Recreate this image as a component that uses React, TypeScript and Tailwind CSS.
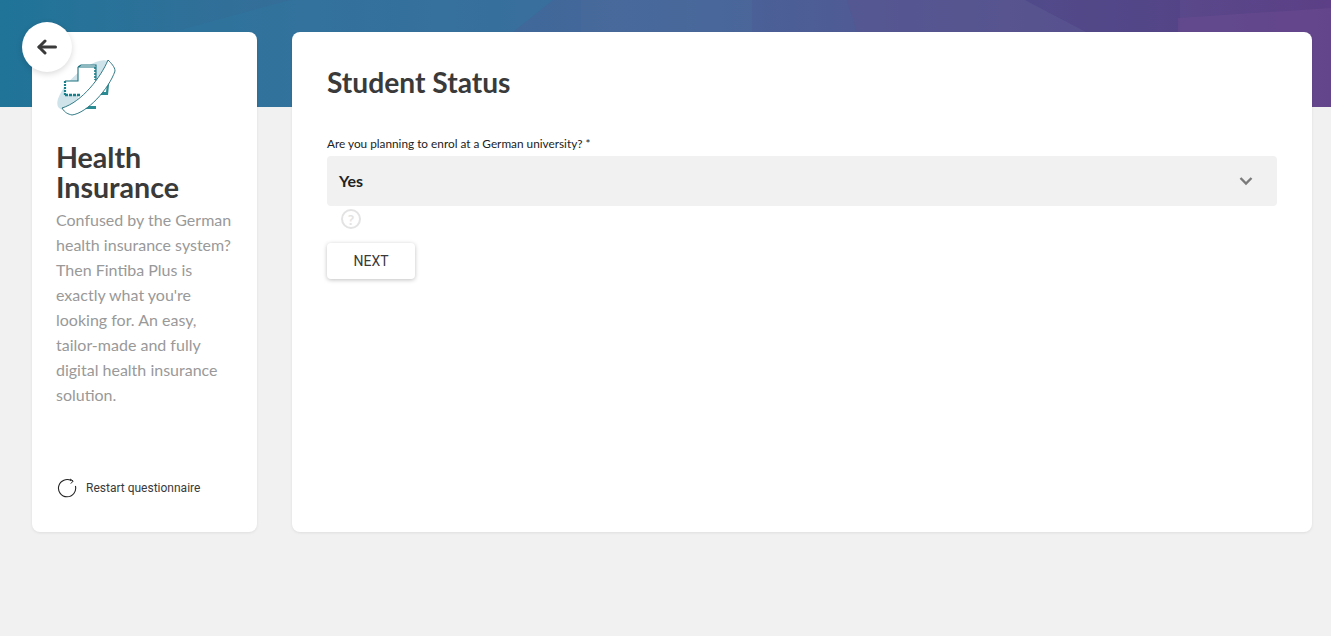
function Banner() {
  return (
    <div className="h-[107px] w-full overflow-hidden bg-gradient-to-r from-[#1f7498] via-[#46659a] to-[#5c3f86]">
      <svg width="1331" height="107" viewBox="0 0 1331 107" fill="none">
        <polygon points="173,32 290,0 553,0 513,32 470,107 260,107" fill="#2f78a0" opacity="0.45" />
        <rect x="581" y="0" width="171" height="107" fill="#4a6b9c" opacity="0.5" />
        <polygon points="847,0 1025,0 1086,32 1086,107 880,107" fill="#5a5590" opacity="0.55" />
        <polygon points="1025,0 1180,0 1180,107 1086,107 1086,32" fill="#4b3f82" opacity="0.35" />
        <polygon points="1178,18 1331,8 1331,107 1178,107" fill="#6a4a90" opacity="0.55" />
      </svg>
    </div>
  )
}

function PlusLogo() {
  return (
    <svg width="60" height="60" viewBox="0 0 60 60" fill="none">
      <ellipse cx="27" cy="28" rx="34" ry="13" transform="rotate(-42 27 28)" fill="#cfe3ea" />
      <path d="M21 8h17v16h13v14H38v14H21V38H8V24h13z" fill="#fff" />
      <path d="M24 8h15v16M21 10l3-2M21 10v14H8M21 10h17" stroke="#1d7380" strokeWidth="1.1" />
      <path d="M8 24v14" stroke="#17808a" strokeWidth="2.2" strokeDasharray="2 1" />
      <path d="M8 38h16" stroke="#17808a" strokeWidth="2.4" strokeDasharray="3 1" />
      <path d="M38 10v13" stroke="#17808a" strokeWidth="1.6" strokeDasharray="2 1" />
      <path d="M43 38h8l1-10v-2l-2 0-1 9h-6zM28 49h11v3H28z" fill="#2a8c92" />
      <path d="M5 51C8 56 11 57 15 58C30 56 52 32 58 14C58 10 54 6 51 3C44 20 25 45 5 51Z" fill="#fff" stroke="#1d6d7a" strokeWidth="0.9" strokeLinejoin="round" />
    </svg>
  )
}

function BackArrow() {
  return (
    <svg width="20" height="16" viewBox="0 0 20 16" fill="none" stroke="#3a3a3a" strokeWidth="3" strokeLinecap="round" strokeLinejoin="round">
      <path d="M18.5 8H2" />
      <path d="M8 2L2 8l6 6" />
    </svg>
  )
}

function Chevron() {
  return (
    <svg width="14" height="10" viewBox="0 0 14 10" fill="none" stroke="#7a7a7a" strokeWidth="2.4">
      <path d="M1.5 2l5.5 5.5L12.5 2" />
    </svg>
  )
}

function RestartIcon() {
  return (
    <svg width="20" height="20" viewBox="0 0 20 20" fill="none" stroke="#222" strokeWidth="1.1">
      <path d="M14.5 2.8A8.6 8.6 0 1 0 18.4 8" />
      <path d="M13 1l3.2 2-2.4 2.6" strokeWidth="1" />
    </svg>
  )
}

function QuestionIcon() {
  return (
    <div className="flex h-5 w-5 items-center justify-center rounded-full border-2 border-[#e3e3e3] text-[14px] font-bold text-[#e3e3e3]">
      ?
    </div>
  )
}

export default function App() {
  return (
    <div className="relative h-[636px] overflow-hidden bg-[#f1f1f1] font-['Lato',sans-serif]">
      <Banner />
      <div className="-mt-[75px] flex gap-[35px] pl-8 pr-[19px]">
        <div className="relative flex h-[500px] w-[225px] shrink-0 flex-col rounded-lg bg-white pl-6 pr-[22px] shadow-[0_1px_3px_rgba(0,0,0,0.08)]">
          <button className="absolute -left-[10px] -top-[10px] flex h-[50px] w-[50px] items-center justify-center rounded-full bg-white shadow-[0_2px_6px_rgba(0,0,0,0.15)]">
            <BackArrow />
          </button>
          <div className="mt-[25px] ml-[1px]">
            <PlusLogo />
          </div>
          <h2 className="mt-[25px] text-[28.6px] leading-[30px] font-bold text-[#3a3a3a]">Health Insurance</h2>
          <p className="mt-[5px] -mr-[4px] text-[16px] leading-[25px] text-[#999999]">
            Confused by the German health insurance system? Then Fintiba Plus is exactly what you're looking for. An easy, tailor-made and fully digital health insurance solution.
          </p>
          <div className="mt-auto mb-[34px] flex items-center gap-[9px] pl-[1px]">
            <RestartIcon />
            <span className="font-['Roboto',sans-serif] text-[12px] text-[#3a3a3a]">Restart questionnaire</span>
          </div>
        </div>
        <div className="h-[500px] flex-1 rounded-lg bg-white px-[35px] shadow-[0_1px_3px_rgba(0,0,0,0.08)]">
          <h1 className="mt-[33px] text-[28.2px] leading-[34px] font-bold text-[#3a3a3a]">Student Status</h1>
          <label className="mt-[35px] mb-[2px] block text-[11.8px] leading-[20px] text-[#222222]">Are you planning to enrol at a German university? *</label>
          <div className="flex h-[50px] items-center justify-between rounded bg-[#f1f1f1] pl-3 pr-6">
            <span className="text-[16px] font-bold text-[#222222]">Yes</span>
            <Chevron />
          </div>
          <div className="mt-[3px] pl-[14px]">
            <QuestionIcon />
          </div>
          <button className="mt-[14px] flex h-9 w-[88px] items-center justify-center rounded-sm bg-white font-['Roboto',sans-serif] text-[14px] text-[#3a3a3a] shadow-[0_1px_4px_rgba(0,0,0,0.25)]">
            NEXT
          </button>
        </div>
      </div>
    </div>
  )
}
